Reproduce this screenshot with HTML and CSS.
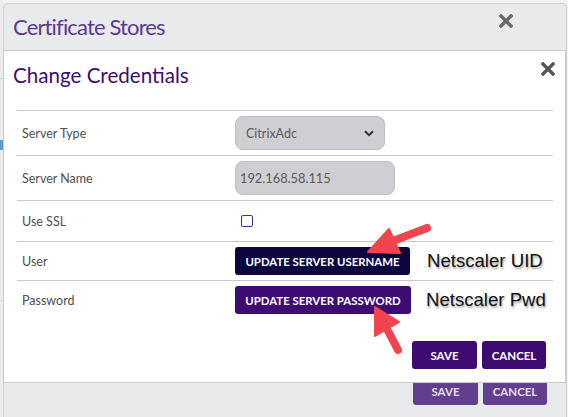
FILE: index.html
```html
<!DOCTYPE html>
<html>
<head>
<meta charset="utf-8">
<link rel="stylesheet" href="styles.css">
</head>
<body>
<div class="page">
  <div class="bg-strip">
    <span class="bg-line l1"></span>
    <span class="bg-line l2"></span>
    <span class="bg-line l3"></span>
  </div>
  <div class="outer">
    <div class="outer-head">
      <h1 class="outer-title">Certificate Stores</h1>
      <svg class="close outer-close" width="14" height="14" viewBox="0 0 14 14"><path d="M2 2 L12 12 M12 2 L2 12" stroke="#6a6a6a" stroke-width="3.4" stroke-linecap="square"/></svg>
    </div>
    <div class="outer-foot">
      <button class="btn btn-faded">SAVE</button>
      <button class="btn btn-faded">CANCEL</button>
    </div>
  </div>

  <div class="inner">
    <div class="inner-head">
      <h2 class="inner-title">Change Credentials</h2>
      <svg class="close inner-close" width="14" height="14" viewBox="0 0 14 14"><path d="M2 2 L12 12 M12 2 L2 12" stroke="#555" stroke-width="3.4" stroke-linecap="square"/></svg>
    </div>
    <div class="form">
      <div class="row r-tall">
        <div class="label">Server Type</div>
        <div class="value">
          <div class="select">CitrixAdc
            <svg class="chev" width="10" height="7" viewBox="0 0 10 7"><path d="M1 1.2 L5 5.2 L9 1.2" fill="none" stroke="#333" stroke-width="2"/></svg>
          </div>
        </div>
      </div>
      <div class="row r-tall">
        <div class="label">Server Name</div>
        <div class="value"><div class="input">192.168.58.115</div></div>
      </div>
      <div class="row r-mid">
        <div class="label">Use SSL</div>
        <div class="value"><span class="checkbox"></span></div>
      </div>
      <div class="row r-short">
        <div class="label">User</div>
        <div class="value">
          <button class="btn btn-navy wide">UPDATE SERVER USERNAME</button>
          <span class="note note-uid">Netscaler UID</span>
        </div>
      </div>
      <div class="row r-short nob">
        <div class="label">Password</div>
        <div class="value">
          <button class="btn btn-purple wide">UPDATE SERVER PASSWORD</button>
          <span class="note note-pwd">Netscaler Pwd</span>
        </div>
      </div>
    </div>
    <div class="inner-foot">
      <button class="btn btn-purple">SAVE</button>
      <button class="btn btn-purple">CANCEL</button>
    </div>
  </div>

  <svg class="arrows" width="568" height="417" viewBox="0 0 568 417">
    <g fill="#f0454f" stroke="#f0454f" stroke-linejoin="round">
      <line x1="393" y1="241" x2="427" y2="228" stroke-width="8" stroke-linecap="round"/>
      <polygon points="368,252 389,229 400,253" stroke-width="2"/>
      <line x1="387" y1="329" x2="398" y2="350" stroke-width="8" stroke-linecap="round"/>
      <polygon points="375,307 399,322 375,336" stroke-width="2"/>
    </g>
  </svg>
</div>
</body>
</html>
```

FILE: styles.css
```css
* { box-sizing: border-box; }
html, body { margin: 0; padding: 0; }
body {
  width: 568px;
  height: 417px;
  overflow: hidden;
  background: #f3f3f4;
  font-family: "Lato", "Open Sans", sans-serif;
}
.page {
  position: relative;
  width: 568px;
  height: 417px;
  overflow: hidden;
}
.bg-strip {
  position: absolute;
  left: 0; top: 0;
  width: 3px; height: 417px;
  background: #ececee;
}
.bg-line { position: absolute; left: 0; width: 3px; height: 1px; background: #c8ccd2; }
.l1 { top: 78px; }
.l2 { top: 140px; background: #5b9bd5; height: 10px; }
.l3 { top: 300px; }

.outer {
  position: absolute;
  left: 3px; top: 3px;
  width: 564px;
  height: 420px;
  background: #e9eaec;
  border: 1px solid #cfd0d3;
  border-radius: 4px 4px 0 0;
  display: flex;
  flex-direction: column;
}
.outer-head {
  display: flex;
  align-items: flex-start;
  padding: 10px 0 0 9px;
}
.outer-title {
  margin: 0;
  font-size: 22px;
  line-height: 26px;
  font-weight: 400;
  letter-spacing: -0.85px;
  color: #5b3a8e;
}
.close { display: block; flex: none; }
.outer-close { margin-left: auto; margin-right: 53px; margin-top: 0px; }
.outer-foot {
  margin-top: auto;
  display: flex;
  justify-content: flex-end;
  gap: 5px;
  padding: 0 19px 17px 0;
}

.inner {
  position: absolute;
  left: 3px; top: 50px;
  width: 563px; height: 333px;
  background: #fff;
  border: 1px solid #c9cacd;
  display: flex;
  flex-direction: column;
  padding: 0 10px 0 9px;
}
.inner-head {
  display: flex;
  align-items: flex-start;
  padding-top: 11px;
}
.inner-title {
  margin: 0;
  font-size: 20.6px;
  line-height: 26px;
  font-weight: 400;
  color: #3a0d70;
}
.inner-close { margin-left: auto; margin-top: 0px; margin-right: 0px; }

.form {
  margin: 22px 3px 0 4px;
  width: 536px;
}
.row {
  display: flex;
  align-items: center;
  border-top: 1px solid #c8c8c8;
}
.r-tall { height: 45px; }
.r-mid { height: 41px; }
.r-short { height: 39px; }
.label {
  width: 218px;
  padding-left: 5px;
  font-size: 12.5px;
  color: #4f4f4f;
}
.value {
  display: flex;
  align-items: center;
}
.select, .input {
  height: 34px;
  background: #cfcfd3;
  border: 1px solid #bdbdc2;
  border-radius: 8px;
  display: flex;
  align-items: center;
  font-size: 12.5px;
  color: #5a5a5a;
}
.select { width: 150px; padding: 0 10px; justify-content: space-between; }
.input { width: 160px; padding: 0 4px; font-size: 12.8px; }
.checkbox {
  width: 12px; height: 12px;
  margin-left: 6px;
  border: 1.5px solid #4b2a85;
  border-radius: 2px;
  background: #fff;
}

.btn {
  height: 28px;
  border: none;
  border-radius: 3px;
  color: #fff;
  font-family: "Lato", sans-serif;
  font-weight: 700;
  font-size: 11.5px;
  padding: 0;
  cursor: pointer;
}
.btn-navy { background: #0c0540; }
.btn-purple { background: #3d0b72; }
.btn-faded { background: #613f8e; color: #e6def0; width: 65px; }
.outer-foot .btn-faded:last-child { width: 64px; }
.wide { width: 175px; font-size: 11.4px; }
.btn-purple.wide { width: 176px; }
.note {
  font-family: "Liberation Sans", Arial, sans-serif;
  font-size: 18.6px;
  color: #111;
  text-shadow: 1px 2px 2px rgba(0,0,0,0.35);
}
.note-uid { margin-left: 17px; }
.note-pwd { margin-left: 15px; }

.inner-foot {
  display: flex;
  justify-content: flex-end;
  gap: 5px;
  margin-top: 22px;
  padding-right: 9px;
}
.inner-foot .btn { width: 65px; }
.inner-foot .btn:last-child { width: 64px; }

.arrows {
  position: absolute;
  left: 0; top: 0;
  pointer-events: none;
}
```
